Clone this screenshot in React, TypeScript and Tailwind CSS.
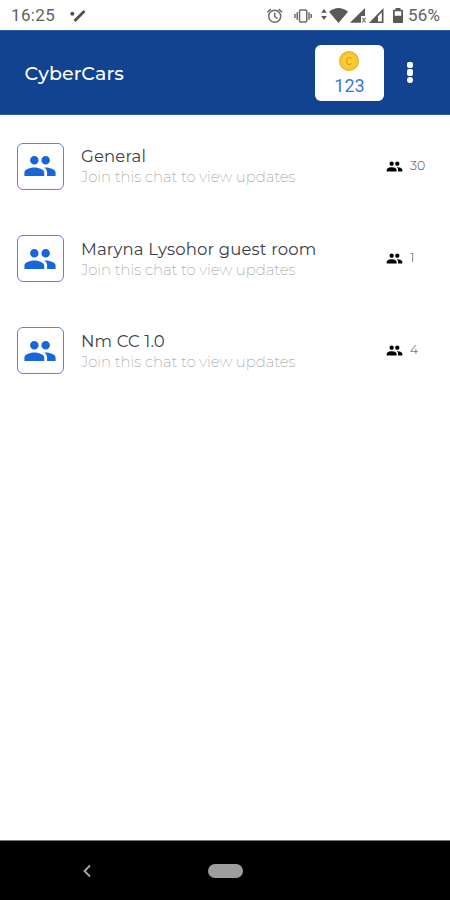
const people =
  'M16 11c1.66 0 2.99-1.34 2.99-3S17.66 5 16 5c-1.66 0-3 1.34-3 3s1.34 3 3 3zm-8 0c1.66 0 2.99-1.34 2.99-3S9.66 5 8 5C6.34 5 5 6.34 5 8s1.34 3 3 3zm0 2c-2.33 0-7 1.17-7 3.5V19h14v-2.5c0-2.33-4.67-3.5-7-3.5zm8 0c-.29 0-.62.02-.97.05 1.16.84 1.97 1.97 1.97 3.45V19h6v-2.5c0-2.33-4.67-3.5-7-3.5z';

function PeopleIcon({ className }: { className: string }) {
  return (
    <svg viewBox="0 0 24 24" className={className} fill="currentColor">
      <path d={people} />
    </svg>
  );
}

const rooms = [
  { name: 'General', members: 30 },
  { name: 'Maryna Lysohor guest room', members: 1 },
  { name: 'Nm CC 1.0', members: 4 },
];

function StatusBar() {
  return (
    <div className="flex h-[30px] shrink-0 items-center bg-white pl-[11px] font-[Roboto,sans-serif] text-[17px] text-[#616161]">
      <span className="w-[59px] pt-[2px] tracking-[0.35px]">16:25</span>
      <svg width="16" height="14" viewBox="0 0 16 14" className="mt-[1px]">
        <circle cx="2.3" cy="4.8" r="2" fill="#505050" />
        <path d="M4.5 12 14.5 2" stroke="#505050" strokeWidth="2.8" />
      </svg>
      {/* alarm, vibrate, network and battery indicators */}
      <svg width="146" height="30" viewBox="260 0 146 30" className="ml-[174px]">
        <g fill="none" stroke="#6b6b6b" strokeWidth="1.5">
          <circle cx="274.7" cy="16.3" r="6" />
          <path d="M267.3 12.3l3.5-3.2M282.1 12.3l-3.5-3.2M274.7 12.7v4l2.8 1.7" />
          <rect x="299.5" y="10" width="7.2" height="12" rx="1" />
          <path d="M297.2 12.2v7.5M309 12.2v7.5M295 14v4M311.2 14v4" />
        </g>
        <g fill="#595959">
          <path d="M324 9l2.8 3.8h-5.6zM324 20l2.8-4h-5.6z" />
          <path d="M329 11.8Q338.5 4.3 348 11.8L338.5 23z" />
          <path d="M365 8v8h-4v6.8H350z" />
          <path d="M362.2 17.8l3.4 4.5M365.6 17.8l-3.4 4.5" stroke="#777" strokeWidth="1.2" />
          <path d="M383.5 8v15H369zM381.8 12.3l-3.8 4v5.2h3.8z" fillRule="evenodd" />
          <path d="M395.5 8h5v1.7h1.500q1 0 1 1V22q0 1-1 1h-8q-1 0-1-1V10.700q0-1 1-1h1.500zM394.700 11.300v4.500h6.600v-4.500z" fillRule="evenodd" />
        </g>
      </svg>
      <span className="ml-[2px] pt-[2px] tracking-[0.2px]">56%</span>
    </div>
  );
}

export default function App() {
  return (
    <div className="flex h-[900px] w-[450px] flex-col overflow-hidden bg-white font-[Montserrat,Inter,sans-serif]">
      <StatusBar />
      <header className="flex h-[85px] shrink-0 items-center border-y border-[#315c9f] bg-[#124391] pl-[24.5px]">
        <h1 className="w-[290.5px] pt-[3px] text-[19px] font-medium tracking-[0.15px] text-white">CyberCars</h1>
        <div className="flex h-[56px] w-[69px] flex-col items-center rounded-[6px] bg-white pt-[6px]">
          <svg width="20" height="20" viewBox="0 0 20 20" className="-ml-[1px]">
            <circle cx="10" cy="10" r="9.3" fill="#fbd033" stroke="#edae2d" strokeWidth="1.4" />
            <circle cx="10" cy="10" r="7.2" fill="none" stroke="#f4bd2d" />
            <path d="M12.6 7.7Q10 4.9 8 7.7Q6.9 10 8 12.3Q10 15.1 12.6 12.3" fill="none" stroke="#dca129" strokeWidth="1.3" />
          </svg>
          <span className="mt-[5px] font-[Roboto,sans-serif] text-[18px] leading-[20px] tracking-[0.1px] text-[#3977df]">123</span>
        </div>
        <div className="ml-[22.5px] flex flex-col gap-[1px]">
          <i className="size-[6.5px] rounded-[2px] bg-white" />
          <i className="size-[6.5px] rounded-[2px] bg-white" />
          <i className="size-[6.5px] rounded-[3px] bg-white" />
        </div>
      </header>
      <main className="flex flex-1 flex-col gap-[45px] pt-[27.8px]">
        {rooms.map((room) => (
          <div key={room.name} className="flex h-[47.2px] items-center pl-[16.5px]">
            <div className="flex size-[47px] shrink-0 items-center justify-center rounded-[6px] border border-[#5384ed]">
              <PeopleIcon className="size-[34px] text-[#1766dc]" />
            </div>
            <div className="ml-[17.5px] w-[305px] pt-[1px] whitespace-nowrap">
              <div className="text-[16.5px] leading-[21px] tracking-[0.15px] text-[#3d4047]">{room.name}</div>
              <div className="text-[15px] leading-[20px] font-extralight tracking-[-0.08px] text-[#9c9c9c]">Join this chat to view updates</div>
            </div>
            <PeopleIcon className="size-[17px] shrink-0 text-black" />
            <span className="ml-[7px] text-[12.5px] font-light text-[#4a4a4a]">{room.members}</span>
          </div>
        ))}
      </main>
      <nav className="flex h-[60px] shrink-0 items-center border-t border-[#777] bg-black pl-[82px]">
        <svg width="10" height="14" viewBox="0 0 10 14" className="mr-[116px]">
          <path d="M8 1.5 2.5 7 8 12.5" fill="none" stroke="#aaa" strokeWidth="1.8" />
        </svg>
        <div className="h-[14px] w-[35px] rounded-full bg-[#9d9d9d]" />
      </nav>
    </div>
  );
}
